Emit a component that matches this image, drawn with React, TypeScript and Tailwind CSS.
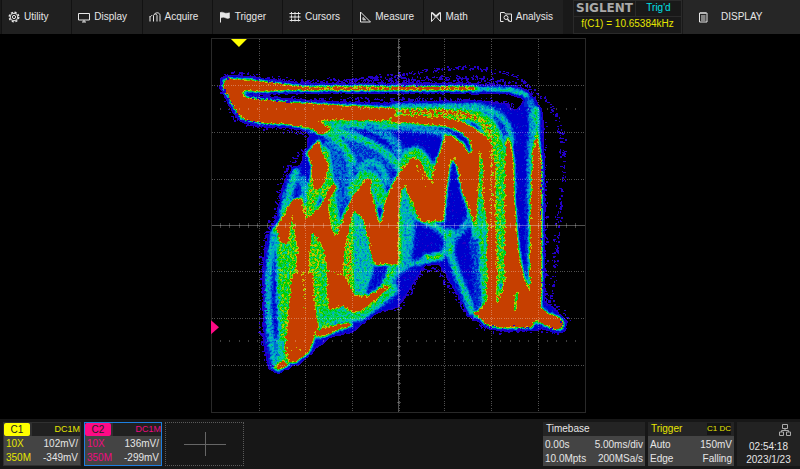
import type { ReactNode } from "react";
import clsx from "clsx";

// ---------- icons ----------

const Icon = ({ children, className }: { children: ReactNode; className?: string }) => (
  <svg
    viewBox="0 0 12 12"
    className={clsx("size-3 shrink-0", className)}
    fill="none"
    stroke="currentColor"
    aria-hidden="true"
  >
    {children}
  </svg>
);

const menu: { label: string; icon: ReactNode }[] = [
  {
    label: "Utility",
    icon: (
      <Icon>
        <circle cx="6" cy="6" r="3.8" strokeWidth="1" />
        <circle cx="6" cy="6" r="1.6" strokeWidth="1" />
        <circle cx="6" cy="6" r="4.8" strokeWidth="1.3" strokeDasharray="2.1 1.67" />
      </Icon>
    ),
  },
  {
    label: "Display",
    icon: (
      <Icon>
        <path d="M.5 2.500h11v6.500H.5zM6 9v2M4 11h4" />
      </Icon>
    ),
  },
  {
    label: "Acquire",
    icon: (
      <Icon>
        <path d="M1 10.500V5M1 6.200C1.500 5 2.300 4.500 3.300 4.500M4.500 10.500V4.500C5 2.500 7.500 2.500 8 4.300V10.500M5.500 3C7.500 1 11 1.500 11 4.500V10.500" />
      </Icon>
    ),
  },
  {
    label: "Trigger",
    icon: (
      <Icon>
        <path d="M1.500 1.500V11.500" />
        <path
          d="M1.500 1.500C3.500.5 5 2 6.500 2.200C8 2.500 9 2 10.500 1.800V7C8.500 8 7 7 5.500 6.500C4 6 3 6.500 1.500 7z"
          fill="currentColor"
          strokeWidth=".5"
        />
      </Icon>
    ),
  },
  {
    label: "Cursors",
    icon: (
      <Icon>
        <path d="M2.500 1v10M6 1v10M9.500 1v10" strokeDasharray="2.600 .6" />
        <path d="M.5 2.500h11M.5 6h11M.5 9.500h11" />
      </Icon>
    ),
  },
  {
    label: "Measure",
    icon: (
      <Icon>
        <path d="M1.500 1v10h10zM4 6.500v2.300h2.500z" />
      </Icon>
    ),
  },
  {
    label: "Math",
    icon: (
      <Icon>
        <path d="M1.500 1.500v9l4-4.500zM10.500 1.500v9l-4-4.500z" />
        <path d="M2 1.500l4 3.500l4-3.500" strokeWidth="1.400" />
      </Icon>
    ),
  },
  {
    label: "Analysis",
    icon: (
      <Icon>
        <path d="M3.500 10.500h-3v-9h4l1 1.500h6v7.500h-2" />
        <circle cx="6" cy="6.500" r="2" />
        <path d="M7.500 8l2 2.500" strokeWidth="1.300" />
      </Icon>
    ),
  },
];

// ---------- persistence trace ----------

type Pt = [number, number];

// small seeded generator so the speckle is the same on every render
const random = (seed: number) => () => {
  seed = (seed * 16807) % 2147483647;
  return seed / 2147483647;
};

const speckle = (line: Pt[], perPx: number, spread: number, seed: number) => {
  const rnd = random(seed);
  let d = "";
  for (let i = 1; i < line.length; i++) {
    const [x0, y0] = line[i - 1];
    const [x1, y1] = line[i];
    const n = Math.round(Math.hypot(x1 - x0, y1 - y0) * perPx);
    for (let k = 0; k < n; k++) {
      const t = rnd();
      const x = Math.round(x0 + (x1 - x0) * t + (rnd() + rnd() - 1) * spread);
      const y = Math.round(y0 + (y1 - y0) * t + (rnd() + rnd() - 1) * spread);
      const w = rnd() > 0.5 ? 2 : 1;
      const h = rnd() > 0.6 ? 2 : 1;
      d += `M${x} ${y}h${w}v${h}h-${w}z`;
    }
  }
  return d;
};

const speckles = [
  speckle([[350, 79], [398, 74], [430, 70], [470, 67], [500, 71], [520, 78], [535, 92]], 0.9, 3, 11),
  speckle([[340, 80], [405, 79], [450, 77], [490, 78], [515, 84], [530, 92]], 0.9, 3, 23),
  speckle([[530, 90], [545, 98], [555, 112], [562, 135], [564, 155]], 1, 4, 37),
  speckle([[564, 150], [563, 180], [560, 210], [557, 240], [554, 280], [550, 305]], 0.8, 4, 41),
  speckle([[224, 76], [236, 72], [250, 75], [270, 79], [300, 81], [340, 81], [395, 82], [500, 83]], 1.2, 4, 53),
  speckle([[220, 84], [228, 104], [236, 120], [260, 125], [290, 129], [308, 136]], 1, 4, 59),
  speckle([[302, 150], [286, 168], [279, 190], [275, 212], [266, 232], [262, 260], [262, 340], [270, 370]], 1, 4, 61),
  speckle([[544, 120], [545, 300]], 0.8, 4, 67),
  speckle([[545, 290], [555, 305], [567, 318], [560, 332], [540, 329], [500, 331], [475, 324]], 0.7, 5, 71),
  speckle([[395, 310], [410, 292], [424, 270], [438, 270], [452, 292], [472, 320]], 0.9, 3, 73),
  speckle([[248, 96], [290, 99], [350, 99], [420, 99], [490, 100], [515, 105]], 0.9, 3, 79),
].join("");

const BODY =
  "M245 97L305 99L395 101L480 99L505 102L516 109L519 104L524 99L522 93L505 89L505 84L522 87L536 98L543 115L545 200L544 300L556 308L564 320L561 329L545 328L533 329L500 328L485 325L471 317L460 300L448 278L438 263L425 263L416 277L408 291L398 306L376 312L362 323L352 331L330 336L315 347L304 358L290 365L275 370L267 367L262 340L262 270L265 240L272 225L279 205L281 186L288 172L300 162L306 145L309 132L290 126L250 119z";

const HOT = [
  // upper left hook and the two bars
  "M223 79L228 77L248 78L285 83L305 85L345 85L474 85L478 88L345 88L300 88L260 89L241 89L243 95L250 97L290 101L340 104L395 107L395 119L340 118L315 118L330 127L321 133L310 126L285 122L260 121L242 117L236 110L232 103L223 86z",
  "M390 114L420 115L445 117L460 120L474 127L486 135L492 145L495 165L495 230L487 228L483 195L483 160L479 148L478 180L475 226L469 207L462 190L457 165L453 156L449 162L446 185L443 219L420 220L413 205L405 183L400 190L398 215L397 263L388 262L374 263L371 250L368 235L362 215L353 208L348 225L343 250L342 290L328 290L327 265L320 240L310 228L308 260L310 290L296 290L296 240L291 212L287 242L279 240L278 228L273 230L285 210L293 198L301 197L302 210L305 218L312 213L320 205L327 190L333 182L336 186L329 196L327 205L330 225L334 236L338 230L343 215L352 197L362 183L365 178L371 178L369 187L373 200L379 226L382 215L387 195L395 177L405 163L413 156L420 160L426 175L431 182L434 165L440 152L445 134L451 134L462 142L469 154L472 150L470 138L458 128L445 124L420 122L390 120z",
  // leaf over the left arches
  "M318 139L306 152L311 160L311 180L314 190L324 180L327 162L321 152z",
  // left foot
  "M292 272L287 320L285 350L288 361L296 360L308 350L313 337L317 325L313 300L312 272z",
  "M327 270L327 308L333 308L342 304L352 311L362 308L375 298L389 285L384 285L368 295L354 295L344 275z",
  "M313 335L321 327L348 322L351 324L338 328L323 335z",
  "M274 366L283 360L287 364L278 368z",
  // right columns
  "M507 135L505 160L505 260L505 275L500 300L497 275L495 225L487 225L487 300L478 311L474 312L488 324L502 326L531 326L535 319L542 322L555 328L562 327L563 321L558 316L548 313L540 307L541 290L541 160L537 131L533 148L531 200L530 288L528 288L523 275L518 250L514 200L513 160L511 145z",
];

// level is the hit density
const STRANDS: { d: string; level: string; width: number }[] = [
  { d: "M340 135C370 150 375 165 395 160", level: "#505050", width: 20 },
  { d: "M330 140C335 165 345 185 340 200", level: "#585858", width: 12 },
  { d: "M310 125C350 130 385 145 398 165", level: "#909090", width: 7 },
  { d: "M330 140C350 145 350 165 350 195", level: "#707070", width: 6 },
  { d: "M322 128C335 135 345 142 352 160", level: "#989898", width: 6 },
  { d: "M320 122L400 124", level: "#989898", width: 5 },
  { d: "M368 125C390 130 400 145 405 165", level: "#686868", width: 8 },
  { d: "M400 125C425 128 440 128 450 136", level: "#707070", width: 5 },
  { d: "M402 165C410 145 420 145 430 172", level: "#a8a8a8", width: 9 },
  { d: "M352 190C362 170 374 165 382 200", level: "#a0a0a0", width: 10 },
  { d: "M360 168C370 155 380 158 386 180", level: "#787878", width: 7 },
  { d: "M324 150L328 178L334 225", level: "#b0b0b0", width: 9 },
  { d: "M307 210L314 185L324 190", level: "#c0c0c0", width: 12 },
  { d: "M275 229C266 260 264 310 274 364", level: "#7c7c7c", width: 5 },
  { d: "M281 240C280 280 284 320 284 358", level: "#b0b0b0", width: 9 },
  { d: "M276 366C284 362 282 350 280 340", level: "#909090", width: 6 },
  { d: "M295 170L287 195L282 212", level: "#888888", width: 6 },
  { d: "M302 178L304 200", level: "#707070", width: 6 },
  { d: "M293 215C293 240 291 260 290 300", level: "#b4b4b4", width: 10 },
  { d: "M312 228C316 255 320 280 322 320", level: "#bcbcbc", width: 16 },
  { d: "M356 215C364 235 365 260 364 292", level: "#808080", width: 17 },
  { d: "M380 268L372 290", level: "#3c3c3c", width: 12 },
  { d: "M349 220C347 250 348 275 350 297", level: "#cacaca", width: 9 },
  { d: "M320 317L360 312L390 288", level: "#989898", width: 12 },
  { d: "M391 268C390 282 376 294 362 300", level: "#b0b0b0", width: 6 },
  { d: "M405 186C404 205 412 215 404 255", level: "#787878", width: 12 },
  { d: "M398 215V262", level: "#b0b0b0", width: 7 },
  { d: "M411 205C420 225 446 220 449 245C452 268 464 285 472 312", level: "#8c8c8c", width: 5 },
  { d: "M450 232L449 248", level: "#a0a0a0", width: 7 },
  { d: "M448 241C444 260 425 259 412 262C400 266 390 278 374 298", level: "#808080", width: 4 },
  { d: "M426 256L440 255", level: "#d0d0d0", width: 3 },
  { d: "M470 210C468 228 456 232 449 241", level: "#707070", width: 5 },
  { d: "M475 222L475 245", level: "#909090", width: 5 },
  { d: "M475 240C475 270 478 290 480 306", level: "#505050", width: 6 },
  { d: "M395 111L440 112L475 114C492 118 500 135 500 165V275", level: "#b0b0b0", width: 10 },
  { d: "M395 105L475 105C500 108 510 122 511 140", level: "#808080", width: 5 },
  { d: "M481 150V235L485 300", level: "#a0a0a0", width: 5 },
  { d: "M400 111L440 112L470 114", level: "#d0d0d0", width: 6 },
  { d: "M395 109L440 109L468 112", level: "#fff", width: 3 },
  { d: "M470 114C485 118 490 130 491 145", level: "#d8d8d8", width: 6 },
  { d: "M474 87L510 88L526 93", level: "#909090", width: 4 },
  { d: "M530 100C533 115 531 130 530 150V280", level: "#707070", width: 4 },
  { d: "M536 108V130", level: "#a0a0a0", width: 4 },
];

// hollow spots painted over the hot areas
const COOL: { d: string; level: string; width: number }[] = [
  { d: "M516 293L515 309", level: "#707070", width: 3 },
  { d: "M498 255L497 300", level: "#989898", width: 4 },
  { d: "M303 270L303 308", level: "#a4a4a4", width: 2 },
  { d: "M321 265L323 313", level: "#808080", width: 6 },
  { d: "M415 163L427 187", level: "#a4a4a4", width: 2 },
  { d: "M491 150V225", level: "#aeaeae", width: 3 },
  { d: "M287 349L299 348", level: "#a8a8a8", width: 2 },
];

const GRID_X = [259, 305, 352, 399, 445, 492, 539];
const GRID_Y = [85, 132, 179, 272, 319, 366];

const ticks = Array.from({ length: 39 }, (_, i) => (i + 1) * 9.375);

const Scope = () => (
  <svg viewBox="211 38 376 376" className="block w-[47%]" role="img" aria-label="XY persistence plot of C1 and C2">
    <defs>
      <filter
        id="heat"
        filterUnits="userSpaceOnUse"
        x="211"
        y="38"
        width="376"
        height="376"
        colorInterpolationFilters="sRGB"
      >
        <feTurbulence type="fractalNoise" baseFrequency="0.4" numOctaves="2" seed="4" result="noise" />
        <feDisplacementMap in="SourceGraphic" in2="noise" scale="5" xChannelSelector="R" yChannelSelector="G" />
        <feGaussianBlur stdDeviation="0.9" result="soft" />
        <feColorMatrix
          in="noise"
          values="2.4 0 0 0 -0.7  2.4 0 0 0 -0.7  2.4 0 0 0 -0.7  0 0 0 0 1"
          result="grain"
        />
        <feComposite in="soft" in2="grain" operator="arithmetic" k1="0.44" k2="0.8" k3="0" k4="0" />
        {/* the last four steps are all saturated, so grain never shows in the hot areas */}
        <feComponentTransfer>
          <feFuncR type="discrete" tableValues="0 .14 0 0 0 0 0 0 0 .43 .8 .78 .78 .78 .78" />
          <feFuncG type="discrete" tableValues="0 0 0 .16 .42 .62 .78 .8 .81 .82 .76 .25 .25 .25 .25" />
          <feFuncB type="discrete" tableValues="0 .78 .8 .82 .82 .8 .66 .35 0 0 0 0 0 0 0" />
        </feComponentTransfer>
      </filter>
    </defs>

    <g filter="url(#heat)" strokeLinejoin="round" strokeLinecap="round" fill="none">
      <rect x="211" y="38" width="376" height="376" fill="#000" />
      {/* the displacement pulls everything up and to the left a little */}
      <g transform="translate(1 2)">
        <g opacity=".8">
          {HOT.map((d) => (
            <path key={d} d={d} stroke="#2c2c2c" strokeWidth="8" />
          ))}
          <path d={BODY} fill="#343434" />
          {STRANDS.map((s) => (
            <path key={s.d} d={s.d} stroke={s.level} strokeWidth={s.width + 5} opacity=".4" />
          ))}
          {STRANDS.map((s) => (
            <path key={s.d} d={s.d} stroke={s.level} strokeWidth={s.width} />
          ))}
        </g>
        {HOT.map((d) => (
          <path key={d} d={d} fill="#fff" stroke="#777" strokeWidth="3" paintOrder="stroke" />
        ))}
        {COOL.map((s) => (
          <path key={s.d} d={s.d} stroke={s.level} strokeWidth={s.width} />
        ))}
      </g>
    </g>
    <path d={speckles} fill="#2400c8" shapeRendering="crispEdges" />

    {/* graticule */}
    <g stroke="#fff" fill="none" shapeRendering="crispEdges">
      <rect x="211.5" y="38.5" width="375" height="375" strokeOpacity=".16" />
      {GRID_X.map((x) => (
        <path key={x} d={`M${x}.5 39V413`} strokeOpacity=".32" strokeDasharray="1 1.340" />
      ))}
      {GRID_Y.map((y) => (
        <path key={y} d={`M212 ${y}.5H586`} strokeOpacity=".32" strokeDasharray="1 1.340" />
      ))}
      <path d="M212 225.500H586M399 39V413" strokeOpacity=".32" />
      {ticks.map((t) => (
        <path
          key={t}
          d={`M${211 + t} 223v5M397 ${38 + t}h4M${211 + t} 108v2M${211 + t} 341v2`}
          strokeOpacity=".25"
        />
      ))}
    </g>

    <path d="M231 39h16l-8 8z" fill="#ff0" />
    <path d="M211 321l8 7l-8 7z" fill="#ff0a86" />
  </svg>
);

// ---------- footer cards ----------

const channels = [
  {
    name: "C1",
    scale: "102mV/",
    offset: "-349mV",
    badge: "bg-[#ffff00]",
    text: "text-[#e6e600]",
    border: "border-[#303030]",
  },
  {
    name: "C2",
    scale: "136mV/",
    offset: "-299mV",
    badge: "bg-[#ff0a86]",
    text: "text-[#ee0a80]",
    border: "border-[#1d7fe0]",
  },
];

const Row = ({ left, right, leftClass }: { left: string; right: string; leftClass?: string }) => (
  <div className="flex justify-between">
    <span className={leftClass}>{left}</span>
    <span>{right}</span>
  </div>
);

export default function App() {
  return (
    <div className="flex min-h-screen flex-col bg-black font-['Liberation_Sans',Arial,sans-serif] text-[10px] leading-[14px] whitespace-nowrap text-[#e6e6e6]">
      <header className="flex h-[34px] bg-[#191919]">
        <nav className="grid flex-1 grid-cols-8 pl-px">
          {menu.map((item) => (
            <button
              key={item.label}
              type="button"
              className="flex items-center gap-1 border-l border-[#121212] bg-[#202020] pl-1.5"
            >
              {item.icon}
              {item.label}
            </button>
          ))}
        </nav>
        <div className="ml-2.5 w-[109px] border border-[#2a2a2a] text-center">
          <div className="flex h-4 border-b border-[#2a2a2a]">
            <span className="w-[62px] border-r border-[#2a2a2a] font-['DejaVu_Sans',sans-serif] text-xs leading-[14px] font-bold text-[#a9a9a9]">
              SIGLENT
            </span>
            <span className="flex-1 text-[#00e0e8]">Trig&apos;d</span>
          </div>
          <div className="text-[#e6e600]">f(C1) = 10.65384kHz</div>
        </div>
        <button type="button" className="ml-px flex w-[117px] items-center gap-3 bg-[#262626] pl-3.5">
          <Icon>
            <path d="M2.500 2v9h7.500V2zM4 1v2M6 1v2M8 1v2M4 5h4.500M4 7h4.500M4 9h4.500" />
          </Icon>
          DISPLAY
        </button>
      </header>

      <main className="flex flex-1 items-start justify-center pt-1 pr-0.5">
        <Scope />
      </main>

      <footer className="flex gap-[3px] bg-[#171717] px-[3px] pt-[3px] pb-[3px]">
        {channels.map((ch) => (
          <button
            key={ch.name}
            type="button"
            className={clsx("w-[78px] border bg-[#444] text-left", ch.border)}
          >
            <div className="flex h-[13px] items-center gap-0.5 bg-[#303030]">
              <span
                className={clsx("w-[26px] rounded-xs text-center leading-[13px] text-[#222]", ch.badge)}
              >
                {ch.name}
              </span>
              <span className={clsx("flex-1 bg-[#202020] text-right text-[9px] leading-[13px]", ch.text)}>
                DC1M
              </span>
            </div>
            <div className="px-0.5 pt-px">
              <Row left="10X" right={ch.scale} leftClass={ch.text} />
              <Row left="350M" right={ch.offset} leftClass={ch.text} />
            </div>
          </button>
        ))}
        <button
          type="button"
          aria-label="Add channel"
          className="flex w-[79px] items-center justify-center border border-dotted border-[#5a5a5a] text-[#666]"
        >
          <svg viewBox="0 0 42 24" className="h-6 w-[42px]" stroke="currentColor" aria-hidden="true">
            <path d="M0 12.500h42M21.500 0v24" />
          </svg>
        </button>

        <section className="ml-auto w-[102px] bg-[#444]">
          <h2 className="h-3.5 bg-[#242424] px-[3px]">Timebase</h2>
          <div className="px-0.5 pt-0.5">
            <Row left="0.00s" right="5.00ms/div" />
            <Row left="10.0Mpts" right="200MSa/s" />
          </div>
        </section>
        <section className="w-[86px] bg-[#444]">
          <div className="flex h-3.5 items-center justify-between bg-[#242424] px-[3px] text-[#e6e600]">
            <h2>Trigger</h2>
            <span className="bg-[#151515] text-[8px] leading-3">C1 DC</span>
          </div>
          <div className="px-0.5 pt-0.5">
            <Row left="Auto" right="150mV" />
            <Row left="Edge" right="Falling" />
          </div>
        </section>
        <div className="-mr-[3px] flex w-[63px] flex-col items-center bg-[#222] pt-0.5">
          <Icon className="mb-1 ml-8 text-[#aaa]">
            <path d="M3.500.5h5v4h-5zM.5 8h4v3.500h-4zM7.500 8h4v3.500h-4zM6 4.500V6.500M2.500 8V6.500h7V8" />
          </Icon>
          <span className="leading-[13px]">02:54:18</span>
          <span className="leading-[13px]">2023/1/23</span>
        </div>
      </footer>
    </div>
  );
}
